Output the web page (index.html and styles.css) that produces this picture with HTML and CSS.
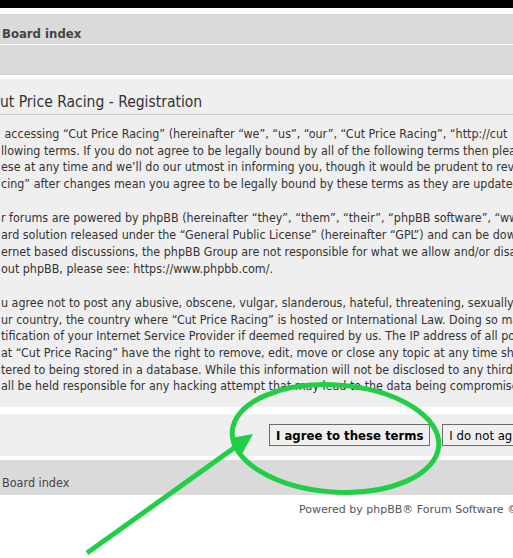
FILE: index.html
```html
<!DOCTYPE html>
<html lang="en">
<head>
  <meta charset="UTF-8">
  <title>Cut Price Racing - Registration</title>
  <link rel="stylesheet" href="styles.css">
</head>
<body>

  <div class="topbar"></div>

  <div class="wrap">
    <div class="navbar">
      <div class="nav-row"><a class="crumb" href="#">Board index</a></div>
      <div class="nav-row nav-row-last"></div>
    </div>

    <div class="panel">
      <h2 class="panel-title">ut Price Racing - Registration</h2>
      <div class="terms">
        <p><span class="first">&nbsp;accessing “Cut Price Racing” (hereinafter “we”, “us”, “our”, “Cut Price Racing”, “http://cut</span>
<span>llowing terms. If you do not agree to be legally bound by all of the following terms then please</span>
<span>ese at any time and we’ll do our utmost in informing you, though it would be prudent to revie</span>
<span>cing” after changes mean you agree to be legally bound by these terms as they are updated a</span></p>
        <p><span>r forums are powered by phpBB (hereinafter “they”, “them”, “their”, “phpBB software”, “ww</span>
<span>ard solution released under the “General Public License” (hereinafter “GPL”) and can be dow</span>
<span>ernet based discussions, the phpBB Group are not responsible for what we allow and/or disa</span>
<span>out phpBB, please see: https://www.phpbb.com/.</span></p>
        <p><span>u agree not to post any abusive, obscene, vulgar, slanderous, hateful, threatening, sexually-o</span>
<span>ur country, the country where “Cut Price Racing” is hosted or International Law. Doing so ma</span>
<span>tification of your Internet Service Provider if deemed required by us. The IP address of all po</span>
<span>at “Cut Price Racing” have the right to remove, edit, move or close any topic at any time shou</span>
<span>tered to being stored in a database. While this information will not be disclosed to any third </span>
<span>all be held responsible for any hacking attempt that may lead to the data being compromised.</span></p>
      </div>
    </div>

    <div class="panel button-panel">
      <button class="btn btn-primary" type="button">I agree to these terms</button>
      <button class="btn" type="button">I do not agree</button>
    </div>

    <div class="navbar-bottom">
      <a class="crumb crumb-plain" href="#">Board index</a>
    </div>

    <div class="copyright">Powered by phpBB® Forum Software ©</div>
  </div>

  <!-- annotation drawn on top of the screenshot -->
  <svg class="markup" width="513" height="558" viewBox="0 0 513 558">
    <ellipse cx="335.5" cy="438.5" rx="103.5" ry="53.5" transform="rotate(4 335.5 438.5)" fill="none" stroke="#21cf47" stroke-width="5"/>
    <line x1="87" y1="553" x2="241" y2="443" stroke="#21cf47" stroke-width="5"/>
    <polygon points="253,434 231,438 242,454" fill="#21cf47"/>
  </svg>

</body>
</html>
```

FILE: styles.css
```css
html, body {
  overflow: hidden;
}

body {
  margin: 0;
  width: 513px;
  height: 558px;
  position: relative;
  background: #fff;
  font-family: 'DejaVu Sans Condensed', 'DejaVu Sans', sans-serif;
  color: #333;
}

.topbar {
  height: 8px;
  background: #000;
}

.wrap {
  padding-top: 6px;
}

.navbar {
  background: #dadada;
}

.nav-row {
  height: 31px;
  display: flex;
  align-items: center;
  padding: 8px 0 0 2px;
  box-sizing: border-box;
  border-bottom: 1px solid #fff;
}

.nav-row-last {
  height: 30px;
  border-bottom: 2px solid #d4d4d4;
}

.crumb {
  color: #444;
  font-weight: bold;
  font-size: 13px;
  text-decoration: none;
  white-space: nowrap;
}

.crumb-plain {
  font-weight: normal;
  font-size: 12.5px;
}

.panel {
  background: #efefef;
  margin-top: 4px;
}

.panel-title {
  margin: 0;
  height: 35px;
  line-height: 47px;
  font-size: 15.5px;
  font-weight: normal;
  color: #333;
  white-space: nowrap;
  border-bottom: 1px solid #c9c9c9;
}

.terms {
  padding: 11px 0 12px 1px;
  font-size: 12.4px;
  line-height: 16.7px;
}

.terms p {
  margin: 0 0 17.6px;
  white-space: pre;
}

.terms p:last-child {
  margin-bottom: 0;
}

.button-panel {
  margin-top: 7px;
  height: 42px;
  display: flex;
  align-items: center;
  gap: 12px;
  padding-left: 269px;
  white-space: nowrap;
}

.btn {
  flex: none;
  height: 22px;
  padding: 0 6px;
  border: 1px solid #6b6b6b;
  background: #f0f0f0;
  color: #000;
  font-family: 'DejaVu Sans Condensed', 'DejaVu Sans', sans-serif;
  font-size: 13px;
}

.btn-primary {
  font-weight: bold;
}

.navbar-bottom {
  margin-top: 4px;
  height: 35px;
  box-sizing: border-box;
  padding: 9px 0 0 2px;
  background: #dadada;
  display: flex;
  align-items: center;
}

.copyright {
  padding: 8px 0 0 299px;
  font-family: 'DejaVu Sans', sans-serif;
  font-size: 11px;
  color: #555;
  white-space: nowrap;
}

.markup {
  position: absolute;
  top: 0;
  left: 0;
  pointer-events: none;
}
```
